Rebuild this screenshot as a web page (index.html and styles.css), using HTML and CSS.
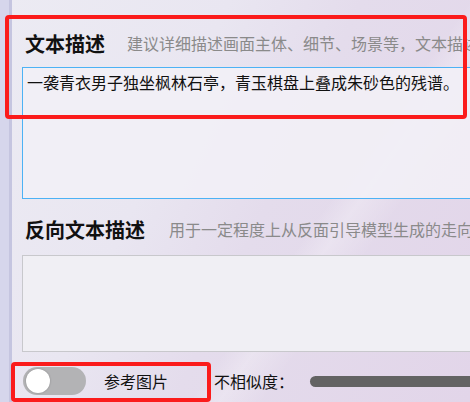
FILE: index.html
```html
<!DOCTYPE html>
<html lang="zh-CN">
<head>
    <meta charset="UTF-8">
    <meta name="viewport" content="width=device-width, initial-scale=1.0">
    <title>文本描述</title>
    <link rel="stylesheet" href="styles.css">
</head>
<body>
    <div class="app">
        <div class="rail"></div>
        <main class="panel">
            <section class="field">
                <div class="fieldHead">
                    <span class="fieldTitle">文本描述</span>
                    <span class="fieldHint">建议详细描述画面主体、细节、场景等，文本描述越详细生成效果越好</span>
                </div>
                <div class="textBox active prompt">一袭青衣男子独坐枫林石亭，青玉棋盘上叠成朱砂色的残谱。</div>
            </section>
            <section class="field second">
                <div class="fieldHead">
                    <span class="fieldTitle">反向文本描述</span>
                    <span class="fieldHint wide">用于一定程度上从反面引导模型生成的走向</span>
                </div>
                <div class="textBox negative"></div>
            </section>
            <div class="controls">
                <div class="switch"><span class="knob"></span></div>
                <span class="switchLabel">参考图片</span>
                <span class="sliderLabel">不相似度：</span>
                <div class="sliderTrack"></div>
            </div>
        </main>

        <!-- highlight marks drawn over the form -->
        <div class="mark markPrompt"></div>
        <div class="mark markRef"></div>
    </div>
</body>
</html>
```

FILE: styles.css
```css
html, body {
    margin: 0;
    padding: 0;
}
body {
    font-family: "Noto Sans CJK SC", "Noto Sans", sans-serif;
    color: #111;
    overflow: hidden;
}
.app {
    position: relative;
    display: flex;
    width: 470px;
    height: 402px;
    overflow: hidden;
    background: linear-gradient(115deg, #ecebf3 0%, #e9e6f1 35%, #e4dcec 55%, #e2d5e9 100%);
}
.rail {
    width: 9px;
    flex-shrink: 0;
    background: #d6d6ec;
    border-right: 3px solid #c5c5e0;
}
.panel {
    flex: 1;
    min-width: 0;
    padding: 29px 0 0 10px;
    overflow: hidden;
    background: linear-gradient(125deg, rgba(255,255,255,0) 62%, rgba(255,255,255,0.25) 66%, rgba(255,255,255,0) 72%);
}
.fieldHead {
    display: flex;
    align-items: center;
    height: 28px;
    white-space: nowrap;
}
.fieldTitle {
    flex-shrink: 0;
    font-size: 20px;
    font-weight: bold;
    margin-left: 3px;
}
.fieldHint {
    flex-shrink: 0;
    font-size: 16px;
    color: #8a8a8a;
    margin-left: 22px;
}
.fieldHint.wide {
    margin-left: 24px;
}
.textBox {
    box-sizing: border-box;
    width: 470px;
    margin-top: 10px;
    padding: 3px 4px;
    font-size: 16px;
    line-height: 22px;
    white-space: nowrap;
    background: #f0eff4;
    border: 1px solid #c8c8cc;
}
.textBox.prompt {
    height: 132px;
    background: rgba(242, 240, 246, 0.9);
}
.textBox.active {
    border-color: #4cb2f5;
}
.second {
    margin-top: 16px;
}
.textBox.negative {
    height: 97px;
    margin-top: 12px;
}
.controls {
    display: flex;
    align-items: center;
    height: 30px;
    margin-top: 14px;
    white-space: nowrap;
}
.switch {
    flex-shrink: 0;
    display: flex;
    align-items: center;
    width: 63px;
    height: 28px;
    margin-left: 1px;
    border-radius: 14px;
    background: #b3b3b5;
}
.knob {
    width: 24px;
    height: 24px;
    margin-left: 3px;
    border-radius: 50%;
    background: #fff;
    box-shadow: 0 0 2px rgba(0,0,0,0.25);
}
.switchLabel {
    flex-shrink: 0;
    font-size: 16px;
    margin-left: 18px;
}
.sliderLabel {
    flex-shrink: 0;
    font-size: 16px;
    margin-left: 46px;
}
.sliderTrack {
    flex-shrink: 0;
    width: 200px;
    height: 11px;
    margin-left: 16px;
    border-radius: 6px;
    background: #636363;
}
.mark {
    position: absolute;
    box-sizing: border-box;
    border: 4px solid #fb1b1b;
    border-radius: 4px;
}
.markPrompt {
    left: 5px;
    top: 15px;
    width: 462px;
    height: 104px;
}
.markRef {
    left: 11px;
    top: 362px;
    width: 200px;
    height: 40px;
}
```
